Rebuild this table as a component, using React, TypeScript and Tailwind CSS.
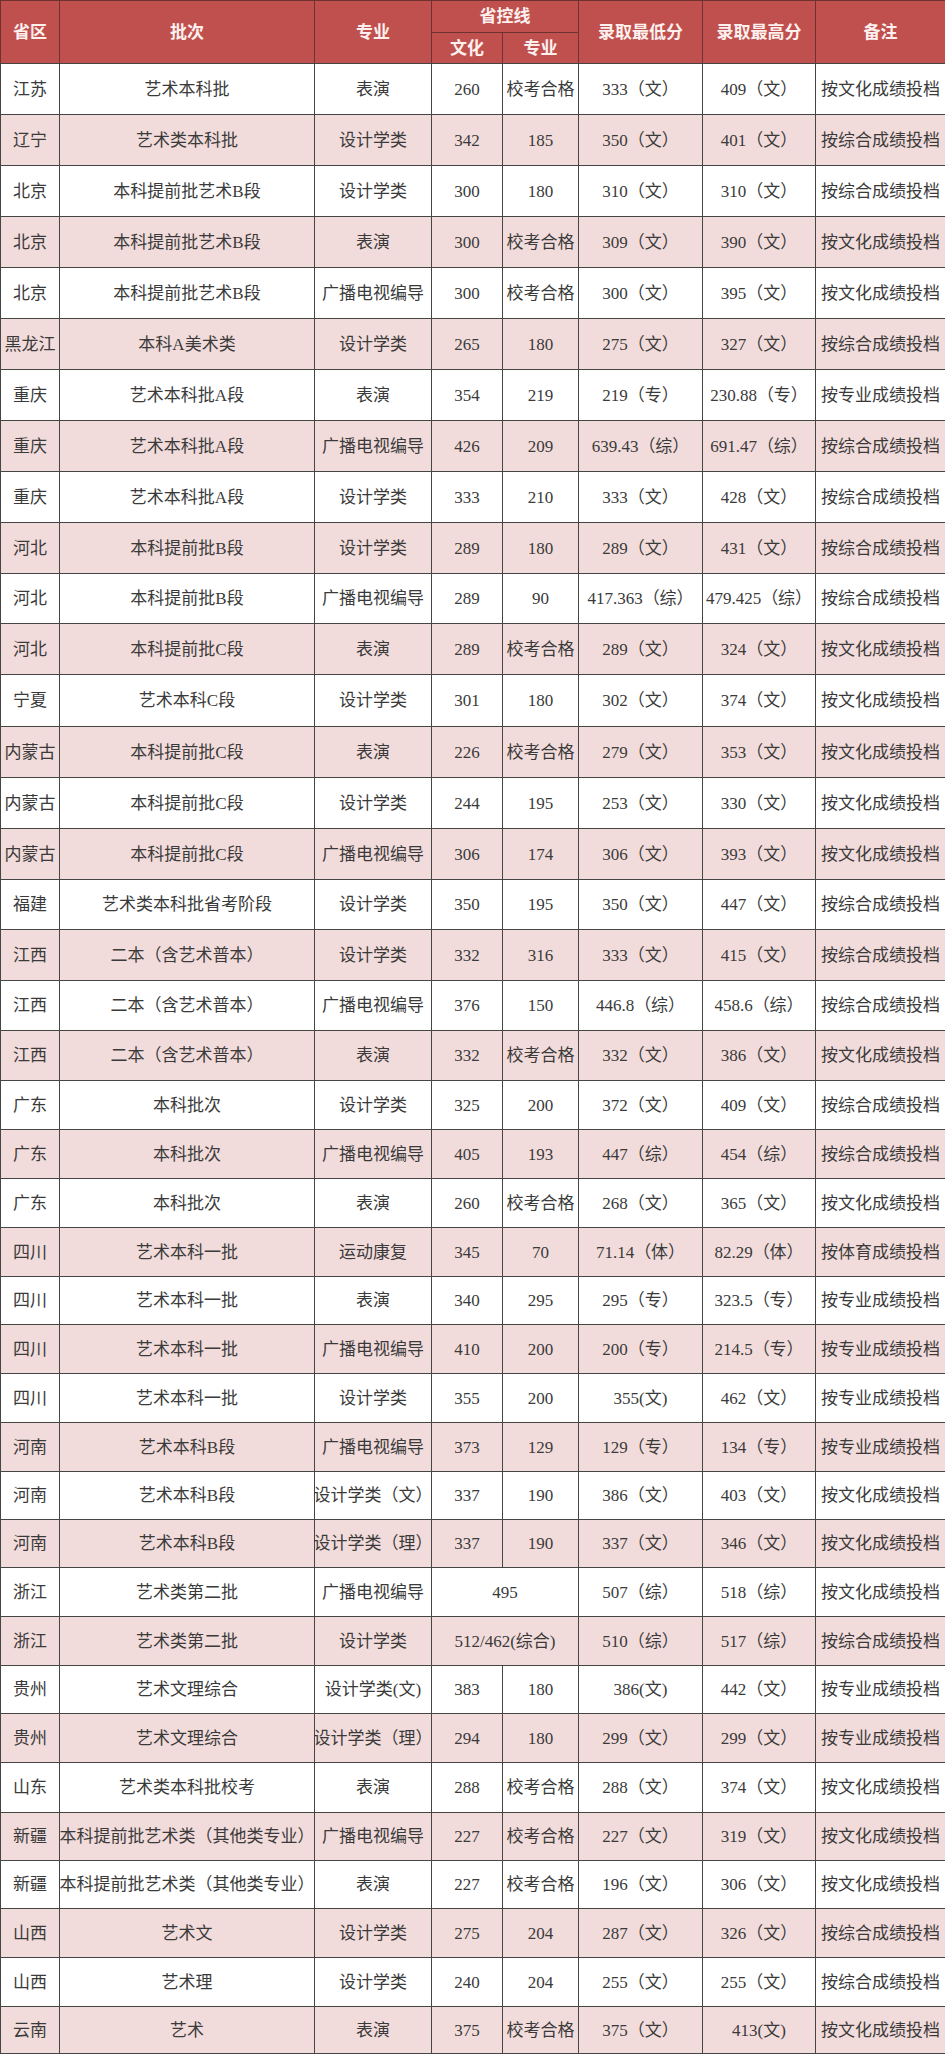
import React from "react";

type Row = {
  h: string;
  c: (string | null)[];
};

const rows: Row[] = [
  { h: "h-[51px]", c: ["江苏", "艺术本科批", "表演", "260", "校考合格", "333（文）", "409（文）", "按文化成绩投档"] },
  { h: "h-[51px]", c: ["辽宁", "艺术类本科批", "设计学类", "342", "185", "350（文）", "401（文）", "按综合成绩投档"] },
  { h: "h-[51px]", c: ["北京", "本科提前批艺术B段", "设计学类", "300", "180", "310（文）", "310（文）", "按综合成绩投档"] },
  { h: "h-[51px]", c: ["北京", "本科提前批艺术B段", "表演", "300", "校考合格", "309（文）", "390（文）", "按文化成绩投档"] },
  { h: "h-[51px]", c: ["北京", "本科提前批艺术B段", "广播电视编导", "300", "校考合格", "300（文）", "395（文）", "按文化成绩投档"] },
  { h: "h-[51px]", c: ["黑龙江", "本科A美术类", "设计学类", "265", "180", "275（文）", "327（文）", "按综合成绩投档"] },
  { h: "h-[51px]", c: ["重庆", "艺术本科批A段", "表演", "354", "219", "219（专）", "230.88（专）", "按专业成绩投档"] },
  { h: "h-[51px]", c: ["重庆", "艺术本科批A段", "广播电视编导", "426", "209", "639.43（综）", "691.47（综）", "按综合成绩投档"] },
  { h: "h-[51px]", c: ["重庆", "艺术本科批A段", "设计学类", "333", "210", "333（文）", "428（文）", "按综合成绩投档"] },
  { h: "h-[51px]", c: ["河北", "本科提前批B段", "设计学类", "289", "180", "289（文）", "431（文）", "按综合成绩投档"] },
  { h: "h-[50px]", c: ["河北", "本科提前批B段", "广播电视编导", "289", "90", "417.363（综）", "479.425（综）", "按综合成绩投档"] },
  { h: "h-[51px]", c: ["河北", "本科提前批C段", "表演", "289", "校考合格", "289（文）", "324（文）", "按文化成绩投档"] },
  { h: "h-[52px]", c: ["宁夏", "艺术本科C段", "设计学类", "301", "180", "302（文）", "374（文）", "按文化成绩投档"] },
  { h: "h-[51px]", c: ["内蒙古", "本科提前批C段", "表演", "226", "校考合格", "279（文）", "353（文）", "按文化成绩投档"] },
  { h: "h-[51px]", c: ["内蒙古", "本科提前批C段", "设计学类", "244", "195", "253（文）", "330（文）", "按文化成绩投档"] },
  { h: "h-[51px]", c: ["内蒙古", "本科提前批C段", "广播电视编导", "306", "174", "306（文）", "393（文）", "按文化成绩投档"] },
  { h: "h-[50px]", c: ["福建", "艺术类本科批省考阶段", "设计学类", "350", "195", "350（文）", "447（文）", "按综合成绩投档"] },
  { h: "h-[51px]", c: ["江西", "二本（含艺术普本）", "设计学类", "332", "316", "333（文）", "415（文）", "按综合成绩投档"] },
  { h: "h-[50px]", c: ["江西", "二本（含艺术普本）", "广播电视编导", "376", "150", "446.8（综）", "458.6（综）", "按综合成绩投档"] },
  { h: "h-[50px]", c: ["江西", "二本（含艺术普本）", "表演", "332", "校考合格", "332（文）", "386（文）", "按文化成绩投档"] },
  { h: "h-[49px]", c: ["广东", "本科批次", "设计学类", "325", "200", "372（文）", "409（文）", "按综合成绩投档"] },
  { h: "h-[49px]", c: ["广东", "本科批次", "广播电视编导", "405", "193", "447（综）", "454（综）", "按综合成绩投档"] },
  { h: "h-[49px]", c: ["广东", "本科批次", "表演", "260", "校考合格", "268（文）", "365（文）", "按文化成绩投档"] },
  { h: "h-[49px]", c: ["四川", "艺术本科一批", "运动康复", "345", "70", "71.14（体）", "82.29（体）", "按体育成绩投档"] },
  { h: "h-[48px]", c: ["四川", "艺术本科一批", "表演", "340", "295", "295（专）", "323.5（专）", "按专业成绩投档"] },
  { h: "h-[49px]", c: ["四川", "艺术本科一批", "广播电视编导", "410", "200", "200（专）", "214.5（专）", "按专业成绩投档"] },
  { h: "h-[49px]", c: ["四川", "艺术本科一批", "设计学类", "355", "200", "355(文)", "462（文）", "按专业成绩投档"] },
  { h: "h-[49px]", c: ["河南", "艺术本科B段", "广播电视编导", "373", "129", "129（专）", "134（专）", "按专业成绩投档"] },
  { h: "h-[48px]", c: ["河南", "艺术本科B段", "设计学类（文）", "337", "190", "386（文）", "403（文）", "按文化成绩投档"] },
  { h: "h-[48px]", c: ["河南", "艺术本科B段", "设计学类（理）", "337", "190", "337（文）", "346（文）", "按文化成绩投档"] },
  { h: "h-[49px]", c: ["浙江", "艺术类第二批", "广播电视编导", "495", null, "507（综）", "518（综）", "按文化成绩投档"] },
  { h: "h-[49px]", c: ["浙江", "艺术类第二批", "设计学类", "512/462(综合)", null, "510（综）", "517（综）", "按综合成绩投档"] },
  { h: "h-[48px]", c: ["贵州", "艺术文理综合", "设计学类(文)", "383", "180", "386(文)", "442（文）", "按专业成绩投档"] },
  { h: "h-[49px]", c: ["贵州", "艺术文理综合", "设计学类（理）", "294", "180", "299（文）", "299（文）", "按专业成绩投档"] },
  { h: "h-[50px]", c: ["山东", "艺术类本科批校考", "表演", "288", "校考合格", "288（文）", "374（文）", "按文化成绩投档"] },
  { h: "h-[48px]", c: ["新疆", "本科提前批艺术类（其他类专业）", "广播电视编导", "227", "校考合格", "227（文）", "319（文）", "按文化成绩投档"] },
  { h: "h-[48px]", c: ["新疆", "本科提前批艺术类（其他类专业）", "表演", "227", "校考合格", "196（文）", "306（文）", "按文化成绩投档"] },
  { h: "h-[49px]", c: ["山西", "艺术文", "设计学类", "275", "204", "287（文）", "326（文）", "按综合成绩投档"] },
  { h: "h-[49px]", c: ["山西", "艺术理", "设计学类", "240", "204", "255（文）", "255（文）", "按综合成绩投档"] },
  { h: "h-[47px]", c: ["云南", "艺术", "表演", "375", "校考合格", "375（文）", "413(文)", "按文化成绩投档"] },
];

const cols = "grid grid-cols-[59px_255px_117px_71px_76px_124px_113px_130px]";

function HeadCell({ children, className = "" }: { children: React.ReactNode; className?: string }) {
  return (
    <div
      className={`flex items-center justify-center whitespace-nowrap border-l border-t border-[#6e3331] font-bold text-[17px] leading-none text-[#fdf0ef] ${className}`}
    >
      {children}
    </div>
  );
}

function Cell({ children, span }: { children: React.ReactNode; span?: boolean }) {
  return (
    <div
      className={`flex items-center justify-center whitespace-nowrap border-l border-t border-[#454545] text-[17px] leading-none text-[#3a3a3a] ${
        span ? "col-span-2" : ""
      }`}
    >
      {children}
    </div>
  );
}

export default function App() {
  return (
    <div className="w-[945px] h-[2056px] overflow-hidden bg-white font-['Liberation_Serif','Noto_Sans_CJK_SC',serif]">
      <div className={`${cols} grid-rows-[32px_31px] bg-[#c0504d]`}>
        <HeadCell className="row-span-2">省区</HeadCell>
        <HeadCell className="row-span-2">批次</HeadCell>
        <HeadCell className="row-span-2">专业</HeadCell>
        <HeadCell className="col-span-2">省控线</HeadCell>
        <HeadCell className="row-span-2">录取最低分</HeadCell>
        <HeadCell className="row-span-2">录取最高分</HeadCell>
        <HeadCell className="row-span-2">备注</HeadCell>
        <HeadCell>文化</HeadCell>
        <HeadCell>专业</HeadCell>
      </div>
      <div className="border-b border-[#454545]">
        {rows.map((r, i) => (
          <div key={i} className={`${cols} ${r.h} ${i % 2 === 1 ? "bg-[#f2dcdb]" : "bg-white"}`}>
            {r.c.map((t, j) => {
              if (t === null) return null;
              const span = j === 3 && r.c[4] === null;
              return (
                <Cell key={j} span={span}>
                  {t}
                </Cell>
              );
            })}
          </div>
        ))}
      </div>
    </div>
  );
}
